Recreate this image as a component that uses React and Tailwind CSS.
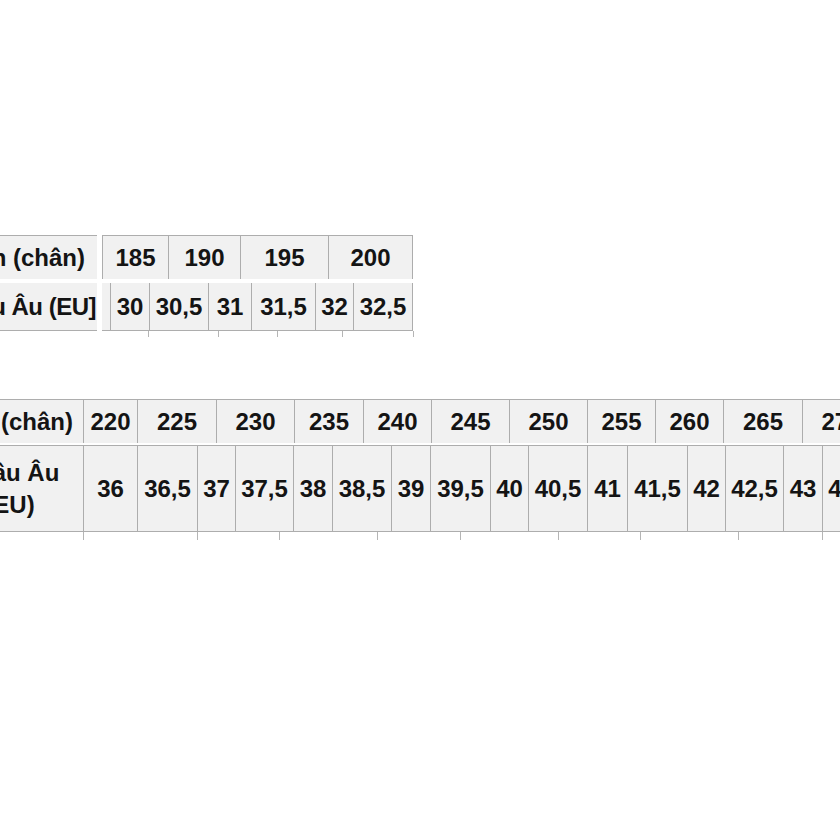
import React from "react";

const topHead = [
  ["185", "w-[66px]"],
  ["190", "w-[72px]"],
  ["195", "w-[88px]"],
  ["200", "w-[85px]"],
];

const topEu = [
  ["30", "w-[39px]"],
  ["30,5", "w-[59px]"],
  ["31", "w-[43px]"],
  ["31,5", "w-[64px]"],
  ["32", "w-[38px]"],
  ["32,5", "w-[60px]"],
];

const bottomHead = [
  ["220", "w-[54px]"],
  ["225", "w-[79px]"],
  ["230", "w-[78px]"],
  ["235", "w-[69px]"],
  ["240", "w-[68px]"],
  ["245", "w-[78px]"],
  ["250", "w-[78px]"],
  ["255", "w-[68px]"],
  ["260", "w-[68px]"],
  ["265", "w-[79px]"],
  ["270", "w-[78px]"],
];

const bottomEu = [
  ["36", "w-[54px]"],
  ["36,5", "w-[60px]"],
  ["37", "w-[38px]"],
  ["37,5", "w-[58px]"],
  ["38", "w-[39px]"],
  ["38,5", "w-[59px]"],
  ["39", "w-[39px]"],
  ["39,5", "w-[60px]"],
  ["40", "w-[38px]"],
  ["40,5", "w-[59px]"],
  ["41", "w-[40px]"],
  ["41,5", "w-[60px]"],
  ["42", "w-[38px]"],
  ["42,5", "w-[58px]"],
  ["43", "w-[39px]"],
  ["43,5", "w-[58px]"],
];

const topTicks = ["ml-[148px]", "ml-[69px]", "ml-[58px]", "ml-[64px]", "ml-[70px]"];
const bottomTicks = [
  "ml-[83px]",
  "ml-[113px]",
  "ml-[81px]",
  "ml-[97px]",
  "ml-[82px]",
  "ml-[97px]",
  "ml-[81px]",
  "ml-[97px]",
  "ml-[83px]",
];

const Cell = ({ value, w, last }) => (
  <div
    className={`${w} shrink-0 h-full flex items-center justify-center border-l border-[#adadad] bg-[#f1f1f1] ${
      last ? "border-r" : ""
    }`}
  >
    {value}
  </div>
);

const Ticks = ({ items, h }) => (
  <div className={`flex ${h}`}>
    {items.map((m, i) => (
      <div key={i} className={`${m} w-px h-full shrink-0 bg-[#b5b5b5]`} />
    ))}
  </div>
);

export default function App() {
  return (
    <div className="w-[840px] h-[840px] overflow-hidden bg-white text-[#141414] text-[24px] leading-none font-bold font-['Liberation_Sans',Arial,sans-serif]">
      <div className="flex flex-col pt-[235px]">
        {/* bảng nhỏ */}
        <div className="flex h-[44px]">
          <div className="ml-[-103px] w-[200px] shrink-0 h-full border-t border-[#adadad] bg-[#f1f1f1] flex items-center justify-end pr-[12px] whitespace-nowrap overflow-hidden">
            Size Hàn (chân)
          </div>
          <div className="w-[5px] shrink-0" />
          <div className="flex h-full border-t border-[#adadad]">
            {topHead.map(([v, w], i) => (
              <Cell key={v} value={v} w={w} last={i === topHead.length - 1} />
            ))}
          </div>
        </div>
        <div className="flex h-[48px] mt-[4px]">
          <div className="ml-[-103px] w-[200px] shrink-0 h-full border-b border-[#adadad] bg-[#f1f1f1] flex items-center justify-end pr-[1px] whitespace-nowrap overflow-hidden tracking-[-0.5px]">
            Size Châu Âu (EU]
          </div>
          <div className="w-[5px] shrink-0" />
          <div className="flex h-full border-b border-[#adadad]">
            <div className="w-[8px] shrink-0 h-full bg-[#f1f1f1]" />
            {topEu.map(([v, w], i) => (
              <Cell key={v} value={v} w={w} last={i === topEu.length - 1} />
            ))}
          </div>
        </div>
        <Ticks items={topTicks} h="h-[6px]" />

        {/* bảng lớn */}
        <div className="flex h-[44px] mt-[62px]">
          <div className="ml-[-63px] w-[146px] shrink-0 h-full border-t border-[#adadad] bg-[#f1f1f1] flex items-center justify-end pr-[10px] whitespace-nowrap overflow-hidden">
            Size Hàn (chân)
          </div>
          <div className="flex h-full border-t border-[#adadad]">
            {bottomHead.map(([v, w]) => (
              <Cell key={v} value={v} w={w} />
            ))}
          </div>
        </div>
        <div className="flex h-[87px] mt-[2px]">
          <div className="ml-[-63px] w-[146px] shrink-0 h-full border-y border-[#adadad] bg-[#f1f1f1] flex items-center justify-center text-center leading-[32px] whitespace-nowrap">
            Châu Âu
            <br />
            (EU)
          </div>
          <div className="flex h-full border-y border-[#adadad]">
            {bottomEu.map(([v, w]) => (
              <Cell key={v} value={v} w={w} />
            ))}
          </div>
        </div>
        <Ticks items={bottomTicks} h="h-[8px]" />
      </div>
    </div>
  );
}
